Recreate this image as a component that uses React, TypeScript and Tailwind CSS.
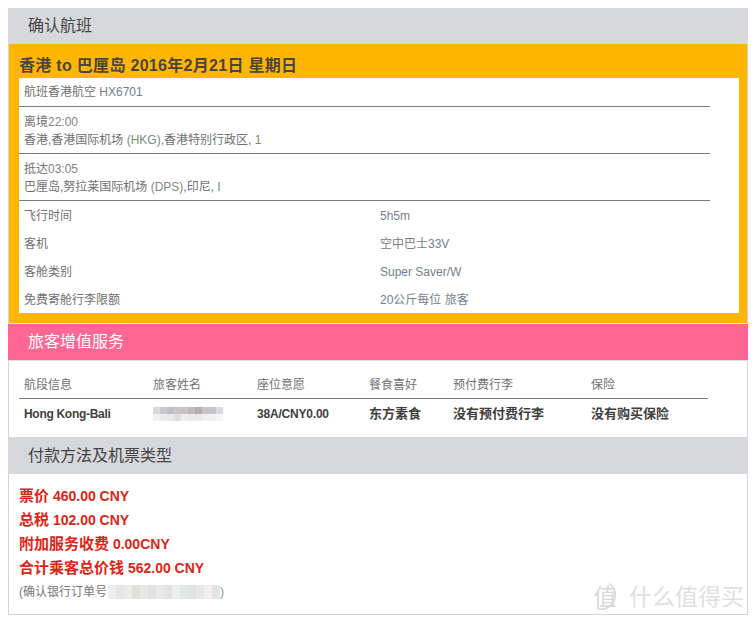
import React from "react";

const cjk = "font-['Liberation_Sans','Noto_Sans_CJK_SC',sans-serif]";

const details = [
  { label: "飞行时间", value: "5h5m" },
  { label: "客机", value: "空中巴士33V" },
  { label: "客舱类别", value: "Super Saver/W" },
  { label: "免费寄舱行李限额", value: "20公斤每位 旅客" },
];

const nameBlur = [
  ["#dcd8d8", "#c9c7cb", "#bfbfc6", "#c9c5c8", "#c8c4c6", "#bdbcc0", "#b3aeab", "#c6c4c8", "#c3c4cc", "#dcdce0"],
  ["#f1efef", "#ecebeb", "#e9e9ea", "#dedede", "#eeeeee", "#ececec", "#eaeaea", "#efefef", "#f0f0f0", "#f6f6f6"],
];

const orderBlur = [
  "#eeeeee", "#e4e5e5", "#ecebe9", "#e2e0dd", "#e8e8e6", "#e0e2e2", "#e9e9e9", "#e1e3e4", "#eceded", "#e4e6e6", "#dfe2e4", "#e6e8e9", "#f1f1f1", "#e2e5e8",
];

const prices = [
  { label: "票价", amount: "460.00 CNY" },
  { label: "总税", amount: "102.00 CNY" },
  { label: "附加服务收费", amount: "0.00CNY" },
  { label: "合计乘客总价钱", amount: "562.00 CNY" },
];

const SectionHeader = ({ title, pink }: { title: string; pink?: boolean }) => (
  <div className={`h-9 flex items-center pl-5 text-base ${pink ? "bg-[#ff6694] text-white" : "bg-[#d7d8dc] text-[#444]"}`}>
    {title}
  </div>
);

const Watermark = () => (
  <div className="absolute left-[590px] top-[582px] flex items-center gap-[9px] text-[#e0e0e0]">
    <div className="relative w-[30px] h-[30px] flex items-center justify-center text-[23px] leading-none text-[#d8d8d8]">
      <svg className="absolute inset-0" width="30" height="30" viewBox="0 0 30 30" fill="none">
        <path d="M19 1.5A14 14 0 0 1 7 26.5" stroke="#d8d8d8" strokeWidth="1.5" />
      </svg>
      值
    </div>
    <div className="text-[23px] leading-none whitespace-nowrap">什么值得买</div>
  </div>
);

export default function App() {
  return (
    <div className={`${cjk} relative w-[756px] h-[622px] bg-white pt-2 pl-2 text-xs overflow-hidden`}>
      <div className="w-[740px] h-[607px] border-x border-b border-[#d5d5d5]">
        <div className="-mx-px">
          <SectionHeader title="确认航班" />
        </div>

        {/* flight panel */}
        <div className="bg-[#ffb600] pl-2.5 pr-2 pb-2.5 h-[279px] flex flex-col">
          <div className="h-[34px] pt-[12px] text-base leading-[20px] font-bold tracking-[0.3px] text-[#4b4540]">
            香港 to 巴厘岛 2016年2月21日 星期日
          </div>
          <div className="flex-1 bg-white text-[#6f6f6f]">
            <div className="w-[691px]">
              <div className="h-[29px] pl-[5px] pt-[6px] leading-[16px] border-b border-[#7c7c7c]">
                航班香港航空 <span className="text-[#6f7f90]">HX6701</span>
              </div>
              <div className="h-[47px] pl-[5px] pt-[6px] leading-[18px] border-b border-[#7c7c7c]">
                <div>离境<span className="text-[#80858a]">22:00</span></div>
                <div>香港,香港国际机场 <span className="text-[#7a8a7a]">(HKG)</span>,香港特别行政区, <span className="text-[#6f8f6f]">1</span></div>
              </div>
              <div className="h-[47px] pl-[5px] pt-[6px] leading-[18px] border-b border-[#7c7c7c]">
                <div>抵达<span className="text-[#80858a]">03:05</span></div>
                <div>巴厘岛,努拉莱国际机场 <span className="text-[#7a8a7a]">(DPS)</span>,印尼, <span className="text-[#6f8f6f]">I</span></div>
              </div>
            </div>
            {details.map((row) => (
              <div key={row.label} className="h-7 pt-[2px] flex items-center pl-[5px]">
                <div className="w-[356px]">{row.label}</div>
                <div className="text-[#74808c]">{row.value}</div>
              </div>
            ))}
          </div>
        </div>

        <div className="h-px bg-[#eeeeee]" />
        <div className="-mx-px">
          <SectionHeader title="旅客增值服务" pink />
        </div>
        <div className="h-px bg-[#dddddd]" />

        {/* services table */}
        <div className="h-[76px] pt-3 pl-2.5">
          <div className="w-[689px] h-[26px] pb-px grid grid-cols-[129px_104px_112px_84px_138px_1fr] items-center pl-[5px] border-b border-[#7c7c7c] text-[#707070]">
            <div>航段信息</div>
            <div>旅客姓名</div>
            <div>座位意愿</div>
            <div>餐食喜好</div>
            <div>预付费行李</div>
            <div>保险</div>
          </div>
          <div className="w-[689px] h-[29px] grid grid-cols-[129px_104px_112px_84px_138px_1fr] items-center pl-[5px] font-bold text-[#3f3f3f]">
            <div className="tracking-[-0.3px]">Hong Kong-Bali</div>
            <div className="flex flex-col w-[70px]">
              {nameBlur.map((line, i) => (
                <div key={i} className="flex h-[7px]">
                  {line.map((c, j) => (
                    <div key={j} className="w-[7px]" style={{ backgroundColor: c }} />
                  ))}
                </div>
              ))}
            </div>
            <div className="tracking-[-0.2px]">38A/CNY0.00</div>
            <div className="text-[13px]">东方素食</div>
            <div className="text-[13px]">没有预付费行李</div>
            <div className="text-[13px]">没有购买保险</div>
          </div>
        </div>

        <div className="-mx-px">
          <div className="h-[37px] flex items-center pl-5 text-base bg-[#d7d8dc] text-[#444]">付款方法及机票类型</div>
        </div>

        {/* payment */}
        <div className="pt-[10px] pl-2.5 text-sm font-bold text-[#dd2418] leading-6">
          {prices.map((p) => (
            <div key={p.label} className="h-6">
              <span className="text-[15px]">{p.label}</span> {p.amount}
            </div>
          ))}
          <div className="h-6 flex items-center text-xs font-normal text-[#777]">
            (确认银行订单号
            <div className="flex h-[14px] ml-px">
              {orderBlur.map((c, i) => (
                <div key={i} className="w-2" style={{ backgroundColor: c }} />
              ))}
            </div>
            <span className="text-[#6f8fc0]">)</span>
          </div>
        </div>
      </div>
      <Watermark />
    </div>
  );
}
